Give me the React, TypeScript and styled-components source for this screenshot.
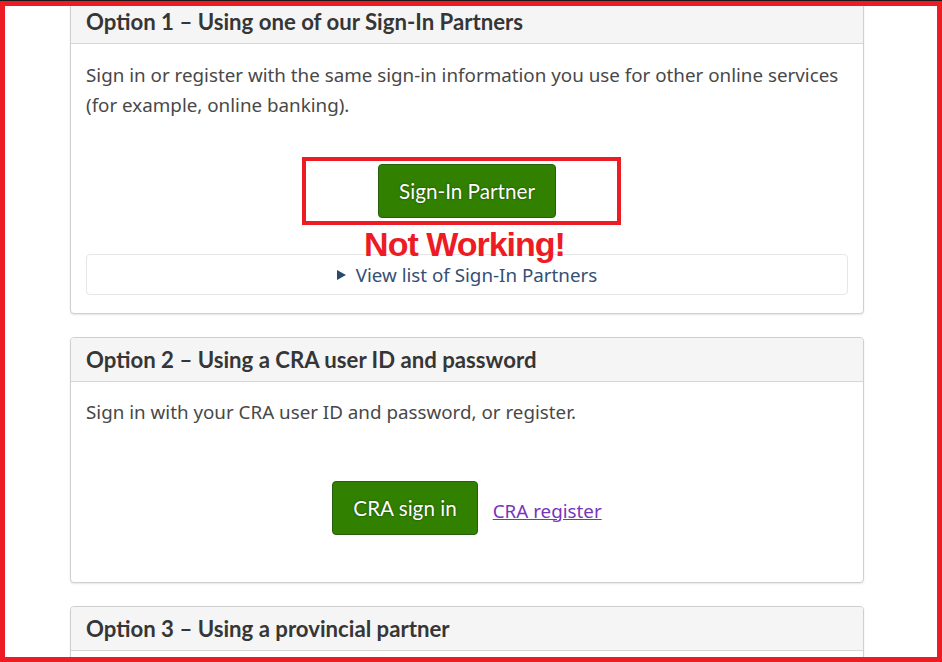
import React from 'react';
import styled, { createGlobalStyle } from 'styled-components';

const Global = createGlobalStyle`
  html, body { margin: 0; padding: 0; background: #fff; }
  body { width: 942px; height: 662px; overflow: hidden; }
`;

const Screen = styled.div`
  width: 942px;
  height: 662px;
  box-sizing: border-box;
  border-top: 1px solid #1a1a1a;
  background: #fff;
  overflow: hidden;
`;

const Frame = styled.div`
  height: 661px;
  box-sizing: border-box;
  border: 5px solid #ed1c24;
  overflow: hidden;
  padding-left: 65px;
`;

const Stack = styled.div`
  width: 794px;
  display: flex;
  flex-direction: column;
  gap: 23px;
  margin-top: -7px;
`;

const Panel = styled.section`
  flex-shrink: 0;
  border: 1px solid #cfcfcf;
  border-radius: 4px;
  background: #fff;
  box-shadow: 0 1px 2px rgba(0, 0, 0, 0.1);
`;

const PanelHeading = styled.h3`
  margin: 0;
  height: 44px;
  box-sizing: border-box;
  padding: 0 15px;
  display: flex;
  align-items: center;
  background: #f5f5f5;
  border-bottom: 1px solid #d6d6d6;
  border-radius: 3px 3px 0 0;
  font-family: Lato, 'Noto Sans', sans-serif;
  font-weight: 700;
  font-size: 22.2px;
  color: #363636;
`;

const PanelBody = styled.div<{ $pt: number; $pb: number }>`
  padding: ${(p) => p.$pt}px 15px ${(p) => p.$pb}px;
  display: flex;
  flex-direction: column;
`;

const Text = styled.p`
  margin: 0;
  font-family: 'Noto Sans', 'Open Sans', sans-serif;
  font-size: 18.8px;
  line-height: 30px;
  color: #484848;
`;

const ButtonRow = styled.div<{ $mt: number }>`
  position: relative;
  margin-top: ${(p) => p.$mt}px;
  display: flex;
  justify-content: center;
  align-items: center;
  gap: 15px;
`;

const GreenButton = styled.button`
  height: 54px;
  padding: 0 20px;
  box-sizing: border-box;
  background: #318000;
  border: 1px solid #25610a;
  border-radius: 4px;
  color: #fff;
  font-family: Lato, 'Noto Sans', sans-serif;
  font-size: 20.7px;
  font-weight: 400;
  text-shadow: 0 0 2px rgba(0, 0, 0, 0.6);
  cursor: pointer;
`;

const Link = styled.a`
  margin-top: 5px;
  font-family: 'Noto Sans', 'Open Sans', sans-serif;
  font-size: 18.8px;
  color: #7834bc;
  text-decoration: underline;
  cursor: pointer;
`;

const Annotation = styled.div`
  position: absolute;
  left: 216px;
  top: -7px;
  width: 319px;
  display: flex;
  flex-direction: column;
  align-items: center;
  pointer-events: none;
`;

const AnnotationBox = styled.div`
  width: 319px;
  height: 68px;
  box-sizing: border-box;
  border: 4px solid #ed1c24;
`;

const AnnotationLabel = styled.div`
  margin-top: 0;
  margin-left: 6px;
  font-family: 'Liberation Sans', Arial, sans-serif;
  font-weight: 700;
  font-size: 34px;
  line-height: 38px;
  letter-spacing: -1px;
  color: #ed1c24;
`;

const Details = styled.details`
  margin-top: 36px;
  border: 1px solid #e6e6e6;
  border-radius: 4px;
`;

const Summary = styled.summary`
  list-style: none;
  height: 39px;
  display: flex;
  align-items: center;
  justify-content: center;
  gap: 10px;
  font-family: 'Noto Sans', 'Open Sans', sans-serif;
  font-size: 18.8px;
  color: #335075;
  cursor: pointer;
  &::-webkit-details-marker { display: none; }
`;

const Caret = styled.span`
  width: 0;
  height: 0;
  border-top: 5px solid transparent;
  border-bottom: 5px solid transparent;
  border-left: 9px solid #2b4a6b;
`;

export default function App() {
  return (
    <>
      <Global />
      <Screen>
        <Frame>
          <Stack>
            <Panel>
              <PanelHeading>Option 1 – Using one of our Sign-In Partners</PanelHeading>
              <PanelBody $pt={16} $pb={18}>
                <Text>
                  Sign in or register with the same sign-in information you use for other online services
                  (for example, online banking).
                </Text>
                <ButtonRow $mt={44}>
                  <GreenButton>Sign-In Partner</GreenButton>
                  <Annotation>
                    <AnnotationBox />
                    <AnnotationLabel>Not Working!</AnnotationLabel>
                  </Annotation>
                </ButtonRow>
                <Details>
                  <Summary>
                    <Caret />
                    View list of Sign-In Partners
                  </Summary>
                </Details>
              </PanelBody>
            </Panel>
            <Panel>
              <PanelHeading>Option 2 – Using a CRA user ID and password</PanelHeading>
              <PanelBody $pt={15} $pb={47}>
                <Text>Sign in with your CRA user ID and password, or register.</Text>
                <ButtonRow $mt={54}>
                  <GreenButton>CRA sign in</GreenButton>
                  <Link>CRA register</Link>
                </ButtonRow>
              </PanelBody>
            </Panel>
            <Panel>
              <PanelHeading>Option 3 – Using a provincial partner</PanelHeading>
              <PanelBody $pt={15} $pb={15}>
                <Text>&nbsp;</Text>
              </PanelBody>
            </Panel>
          </Stack>
        </Frame>
      </Screen>
    </>
  );
}
